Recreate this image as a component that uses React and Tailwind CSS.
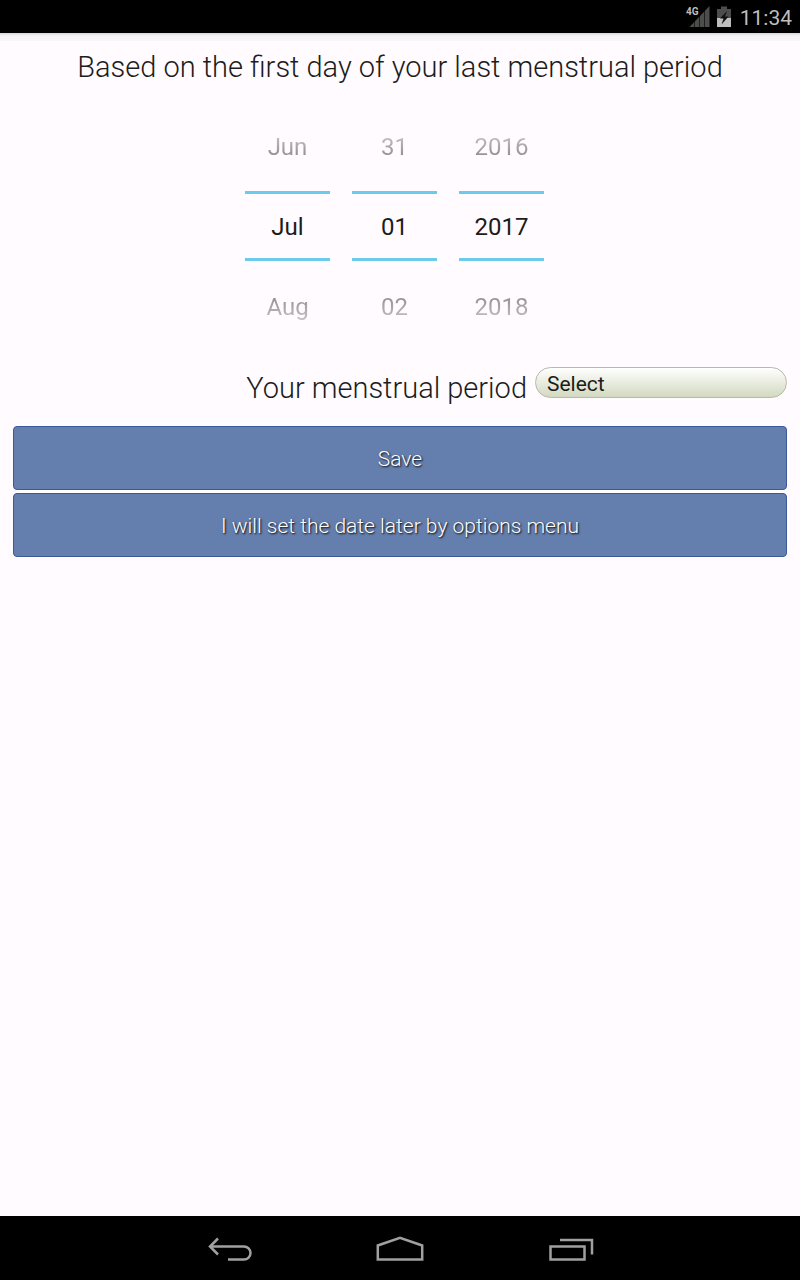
import { useState } from "react";

const MONTHS = ["Jan", "Feb", "Mar", "Apr", "May", "Jun", "Jul", "Aug", "Sep", "Oct", "Nov", "Dec"];
const DAYS = Array.from({ length: 31 }, (_, i) => String(i + 1).padStart(2, "0"));
const YEARS = Array.from({ length: 30 }, (_, i) => String(2000 + i));

function StatusBar() {
  return (
    <header className="flex h-[33px] items-center justify-end bg-black px-2 text-[#bebebe]">
      <svg className="mr-[7px] h-6 w-6" viewBox="0 0 24 24" role="img" aria-label="4G signal">
        <path d="M23.5 1V22H3.5Z" fill="#4c4e4c" />
        <path d="M8.5 15V22M13.5 8V22M18.5 5V22" stroke="#000" strokeWidth="1" opacity="0.6" />
        <path d="M0 0H13V11H0Z" fill="#000" />
        <text x="0" y="10" fill="#bebebe" fontSize="10" fontWeight="700" fontFamily="Roboto, sans-serif">4G</text>
      </svg>
      <svg className="mr-[9px] h-6 w-[14px]" viewBox="0 0 14 24" role="img" aria-label="Battery charging">
        <path d="M4 1.5H10V4H14V13H0V4H4Z" fill="#4c4e4c" />
        <path d="M0 13H14V22H0Z" fill="#bebebe" />
        <path d="M10 6L3 13.5H6.5L4.5 19.5L11.5 11.5H8Z" fill="#111" />
      </svg>
      <time className="pt-0.5 text-[21px] leading-8">11:34</time>
    </header>
  );
}

function PickerColumn({ label, values, initial }) {
  const [index, setIndex] = useState(values.indexOf(initial));
  const n = values.length;
  const prev = (index + n - 1) % n;
  const next = (index + 1) % n;
  return (
    <div className="flex w-[85px] flex-col gap-[5px] text-center text-2xl">
      <button
        type="button"
        onClick={() => setIndex(prev)}
        className="h-20 bg-linear-to-b from-[#c8c6c8] from-35% to-[#8c8a8c] to-65% bg-clip-text pt-0.5 text-transparent"
      >
        {values[prev]}
      </button>
      <input
        aria-label={label}
        readOnly
        value={values[index]}
        className="h-[70px] w-full border-y-[3px] border-[#6acbed] bg-transparent pt-0.5 text-center text-[#1c1c1c] outline-none"
      />
      <button
        type="button"
        onClick={() => setIndex(next)}
        className="h-20 bg-linear-to-b from-[#8c8a8c] from-35% to-[#c8c6c8] to-70% bg-clip-text pt-0.5 text-transparent"
      >
        {values[next]}
      </button>
    </div>
  );
}

function ActionButton({ children }) {
  return (
    <button
      type="button"
      className="h-16 w-full rounded border border-[#3b5998] bg-[#647ead] pt-[3px] text-[21px] font-light text-white [text-shadow:1px_1px_2px_#000]"
    >
      {children}
    </button>
  );
}

function NavigationBar() {
  return (
    <nav className="flex h-16 items-center justify-center bg-black" aria-label="System">
      <button type="button" aria-label="Back" className="flex w-[170px] justify-center">
        <svg className="h-16 w-12" viewBox="0 0 48 64" fill="none" stroke="#a0a0a0" strokeWidth="2.5">
          <path d="M4 30.5H38A6.5 6.5 0 0 1 38 43.5H22M12 22.5L4 30.5L12 38.5" />
        </svg>
      </button>
      <button type="button" aria-label="Home" className="flex w-[170px] justify-center">
        <svg className="h-16 w-12" viewBox="0 0 48 64" fill="none" stroke="#a0a0a0" strokeWidth="2.5">
          <path d="M1.8 43.5V29.5L24 21.8L46.2 29.5V43.5Z" />
        </svg>
      </button>
      <button type="button" aria-label="Recent apps" className="flex w-[170px] justify-center">
        <svg className="h-16 w-12" viewBox="0 0 48 64" fill="none" stroke="#a0a0a0" strokeWidth="2.5">
          <path d="M4.5 30.5H38.5V43.5H4.5ZM14 24H46V38.5" />
        </svg>
      </button>
    </nav>
  );
}

export default function App() {
  return (
    <div className="flex min-h-screen flex-col bg-[#fffbff] font-['Roboto',sans-serif] text-[#1c1c1c]">
      <StatusBar />
      <main className="flex flex-1 flex-col">
        <div className="h-2 bg-linear-to-b from-[#d8d6d8] via-[#f4f2f4] via-35% to-[#f8f6f8]" />
        <h1 className="pt-1.5 text-center text-[29px] leading-10 font-light">
          Based on the first day of your last menstrual period
        </h1>
        <div className="flex justify-center gap-[22px] pt-[19px] pr-[11px]">
          <PickerColumn label="Month" values={MONTHS} initial="Jul" />
          <PickerColumn label="Day" values={DAYS} initial="01" />
          <PickerColumn label="Year" values={YEARS} initial="2017" />
        </div>
        <div className="flex items-start justify-end gap-2 px-[13px] pt-[21px]">
          <label htmlFor="period" className="text-[29px] leading-[42px] font-light">
            Your menstrual period
          </label>
          <select
            id="period"
            className="h-[31px] w-[252px] appearance-none rounded-2xl border border-[#b4bba6] bg-linear-to-b from-white to-[#d3d9c0] px-[11px] pt-0.5 text-[21px] leading-7"
          >
            <option>Select</option>
            {Array.from({ length: 20 }, (_, i) => (
              <option key={i}>{i + 20} days</option>
            ))}
          </select>
        </div>
        <div className="flex flex-col gap-[3px] px-[13px] pt-[17px]">
          <ActionButton>Save</ActionButton>
          <ActionButton>I will set the date later by options menu</ActionButton>
        </div>
      </main>
      <NavigationBar />
    </div>
  );
}
